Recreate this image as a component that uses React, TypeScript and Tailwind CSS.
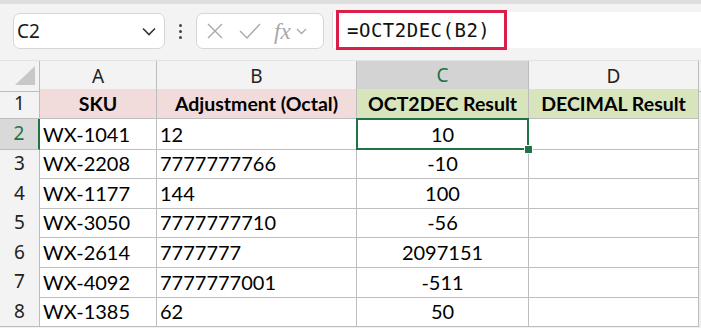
import React from "react";

const rows = [
  ["WX-1041", "12", "10"],
  ["WX-2208", "7777777766", "-10"],
  ["WX-1177", "144", "100"],
  ["WX-3050", "7777777710", "-56"],
  ["WX-2614", "7777777", "2097151"],
  ["WX-4092", "7777777001", "-511"],
  ["WX-1385", "62", "50"],
];

const grid = "grid grid-cols-[40px_117px_200px_172px_170px_2px]";
const cellFont = { fontFamily: "Lato, 'Noto Sans', sans-serif" };

export default function App() {
  return (
    <div className="w-[701px] h-[328px] overflow-hidden bg-[#f0f0f0] relative" style={{ fontFamily: "'Noto Sans', 'Open Sans', sans-serif" }}>
      {/* top toolbar strip */}
      <div className="h-[4px] bg-[#dedede]" />
      <div className="h-[57px] flex items-start pl-[13px] bg-[#f3f3f3] border-b border-[#e3e3e3]">
        <div className="mt-[9px] w-[152px] h-[36px] rounded-[7px] border border-[#d6d6d6] bg-white flex items-center justify-between pl-[3px] pr-[8px]">
          <span className="text-[19px] text-[#1a1a1a] leading-none">C2</span>
          <svg width="14" height="9" viewBox="0 0 14 9"><path d="M1 1.5 L7 7.5 L13 1.5" fill="none" stroke="#333" strokeWidth="1.6" /></svg>
        </div>
        <div className="w-[31px] h-[54px] flex flex-col items-center justify-center gap-[3px]">
          <div className="w-[3px] h-[3px] rounded-full bg-[#444]" />
          <div className="w-[3px] h-[3px] rounded-full bg-[#444]" />
          <div className="w-[3px] h-[3px] rounded-full bg-[#444]" />
        </div>
        <div className="mt-[9px] w-[128px] h-[36px] rounded-[7px] border border-[#d6d6d6] bg-white flex items-center pl-[9px] pr-[5px]">
          <svg width="18" height="18" viewBox="0 0 18 18"><path d="M2 2 L16 16 M16 2 L2 16" stroke="#a8a8a8" strokeWidth="1.4" fill="none" /></svg>
          <svg className="ml-[15px]" width="22" height="16" viewBox="0 0 22 16"><path d="M1 8 L8 15 L21 1" stroke="#a8a8a8" strokeWidth="1.4" fill="none" /></svg>
          <span className="ml-[13px] text-[23px] italic text-[#a8a8a8] leading-none" style={{ fontFamily: "'Liberation Serif', serif" }}>fx</span>
          <svg className="ml-[5px]" width="11" height="7" viewBox="0 0 11 7"><path d="M1 1 L5.5 5.5 L10 1" stroke="#a8a8a8" strokeWidth="1.3" fill="none" /></svg>
        </div>
        <div className="ml-[8px] mt-[8px] flex-1 h-[36px] bg-white border-l border-[#dcdcdc] flex items-center pl-[3px]">
          <div className="h-[40px] w-[171px] border-[3px] border-[#dc1f4a] flex items-center pl-[8px]">
            <span className="text-[19px] text-[#111] leading-none tracking-[0.5px]" style={{ fontFamily: "'DejaVu Sans Mono', monospace" }}>=OCT2DEC(B2)</span>
          </div>
        </div>
      </div>

      {/* column headers */}
      <div className={`${grid} h-[28px] bg-[#f3f3f3]`} style={cellFont}>
        <div className="border-r border-b border-[#bdbdbd] relative">
          <svg className="absolute left-[15px] top-[5px]" width="20" height="19" viewBox="0 0 20 19"><polygon points="20,0 20,19 0,19" fill="#c8c8c8" /></svg>
        </div>
        {["A", "B", "C", "D"].map((c) => (
          <div
            key={c}
            className={
              c === "C"
                ? "bg-[#d3d3d3] text-[#217346] border-r border-[#bdbdbd] border-b-2 border-b-[#217346] flex items-center justify-center text-[19px]"
                : "border-r border-b border-[#bdbdbd] flex items-center justify-center text-[19px] text-[#222]"
            }
            style={{ fontFamily: "'Noto Sans', sans-serif" }}
          >
            {c}
          </div>
        ))}
        <div className="border-b border-[#bdbdbd]" />
      </div>

      {/* row 1 */}
      <div className={`${grid} h-[29.6px]`} style={cellFont}>
        <div className="bg-[#f3f3f3] border-r border-b border-[#bdbdbd] flex items-center justify-center text-[19px] text-[#222]" style={{ fontFamily: "'Noto Sans', sans-serif" }}>1</div>
        <div className="bg-[#f2dcdb] border-r border-b border-[#bdbdbd] flex items-center justify-center text-[19.5px] font-bold text-black">SKU</div>
        <div className="bg-[#f2dcdb] border-r border-b border-[#bdbdbd] flex items-center justify-center text-[19.5px] font-bold text-black">Adjustment (Octal)</div>
        <div className="bg-[#d8e4bc] border-r border-b border-[#bdbdbd] flex items-center justify-center text-[19.5px] font-bold text-black">OCT2DEC Result</div>
        <div className="bg-[#d8e4bc] border-r border-b border-[#bdbdbd] flex items-center justify-center text-[19.5px] font-bold text-black">DECIMAL Result</div>
        <div />
      </div>

      {rows.map((r, i) => {
        const sel = i === 0;
        return (
          <div key={i} className={`${grid} h-[29.6px] bg-white ${sel ? "relative z-10" : ""}`} style={cellFont}>
            <div
              className={
                sel
                  ? "bg-[#d9d9d9] text-[#217346] border-b border-[#bdbdbd] border-r-2 border-r-[#217346] flex items-center justify-center text-[19px]"
                  : "bg-[#f3f3f3] text-[#222] border-r border-b border-[#bdbdbd] flex items-center justify-center text-[19px]"
              }
              style={{ fontFamily: "'Noto Sans', sans-serif" }}
            >
              {i + 2}
            </div>
            <div className="border-r border-b border-[#bdbdbd] flex items-center pl-[3px] text-[20px] text-black">{r[0]}</div>
            <div className="border-r border-b border-[#bdbdbd] flex items-center pl-[3px] text-[20px] text-black">{r[1]}</div>
            <div className="border-r border-b border-[#bdbdbd] flex items-center justify-center text-[20px] text-black relative">
              {r[2]}
              {sel && (
                <>
                  <div className="absolute left-[-1px] top-[-1px] right-[-1px] bottom-[-1px] border-2 border-[#217346]" />
                  <div className="absolute right-[-5px] bottom-[-5px] w-[9px] h-[9px] bg-[#217346] border border-white" />
                </>
              )}
            </div>
            <div className="border-r border-b border-[#bdbdbd]" />
            <div className="bg-[#f0f0f0]" />
          </div>
        );
      })}
    </div>
  );
}
